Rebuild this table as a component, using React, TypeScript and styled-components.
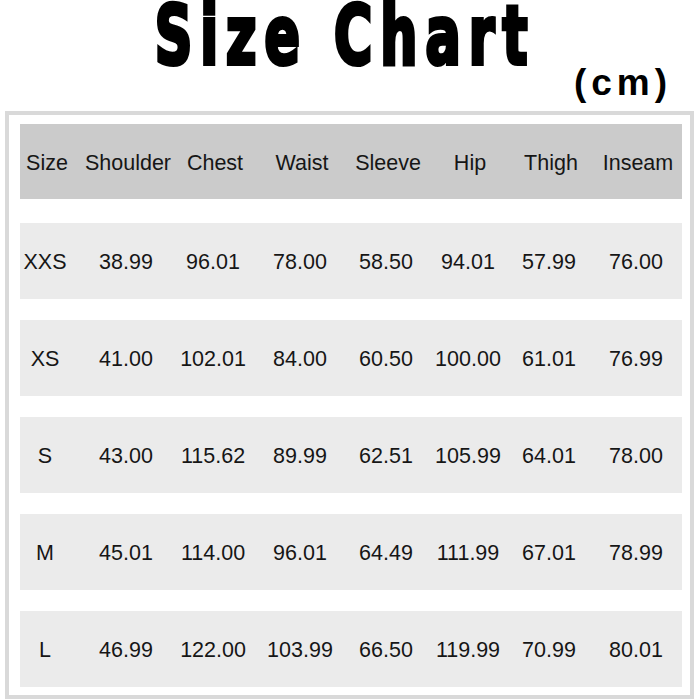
import React from "react";
import styled, { createGlobalStyle } from "styled-components";

const Global = createGlobalStyle`
  html, body { margin: 0; padding: 0; background: #ffffff; }
  body { width: 700px; height: 700px; overflow: hidden; font-family: "Liberation Sans", Arial, sans-serif; color: #111; }
`;

const Page = styled.div`
  width: 700px;
  height: 700px;
  display: flex;
  flex-direction: column;
`;

const TitleBlock = styled.header`
  display: flex;
  flex-direction: column;
  height: 111px;
`;

const Title = styled.h1`
  margin: 0;
  height: 47px;
  padding-top: 2px;
  display: flex;
  justify-content: center;
  align-items: flex-start;
  padding-right: 10px;
  font-family: "DejaVu Sans Condensed", "DejaVu Sans", sans-serif;
  font-stretch: condensed;
  font-weight: 700;
  font-size: 58px;
  line-height: 49px;
  letter-spacing: 8px;
  color: #000;
  -webkit-text-stroke: 3px #000;
  transform-origin: center top;
  transform: scaleY(1.4);
`;

const Unit = styled.div`
  align-self: flex-end;
  margin-right: 28px;
  margin-top: 14px;
  font-family: "Liberation Sans", Arial, sans-serif;
  font-weight: 700;
  font-size: 37px;
  line-height: 40px;
  letter-spacing: 5px;
  color: #000;
`;

const Frame = styled.section`
  margin: 0 6px 0 5px;
  border: 4px solid #d9d9d9;
  padding: 9px 8px 8px 11px;
  display: flex;
  flex-direction: column;
  gap: 21px;
`;

const columns = "50px 112px 62px 112px 60px 104px 58px 116px";

const Row = styled.div<{ $head?: boolean }>`
  display: grid;
  grid-template-columns: ${columns};
  height: ${(p) => (p.$head ? 75 : 76)}px;
  padding-left: ${(p) => (p.$head ? 2 : 0)}px;
  margin-bottom: ${(p) => (p.$head ? 3 : 0)}px;
  align-items: center;
  background: ${(p) => (p.$head ? "#cbcbcb" : "#ebebeb")};
`;

const Cell = styled.div`
  display: flex;
  justify-content: center;
  white-space: nowrap;
  font-family: "Liberation Sans", Arial, sans-serif;
  font-size: 21.5px;
  line-height: 24px;
  color: #161616;
  padding-top: 2px;
`;

const headers = ["Size", "Shoulder", "Chest", "Waist", "Sleeve", "Hip", "Thigh", "Inseam"];

const data: string[][] = [
  ["XXS", "38.99", "96.01", "78.00", "58.50", "94.01", "57.99", "76.00"],
  ["XS", "41.00", "102.01", "84.00", "60.50", "100.00", "61.01", "76.99"],
  ["S", "43.00", "115.62", "89.99", "62.51", "105.99", "64.01", "78.00"],
  ["M", "45.01", "114.00", "96.01", "64.49", "111.99", "67.01", "78.99"],
  ["L", "46.99", "122.00", "103.99", "66.50", "119.99", "70.99", "80.01"],
];

export default function App() {
  return (
    <Page>
      <Global />
      <TitleBlock>
        <Title>Size Chart</Title>
        <Unit>(cm)</Unit>
      </TitleBlock>
      <Frame>
        <Row $head>
          {headers.map((h) => (
            <Cell key={h}>{h}</Cell>
          ))}
        </Row>
        {data.map((r) => (
          <Row key={r[0]}>
            {r.map((v, i) => (
              <Cell key={i}>{v}</Cell>
            ))}
          </Row>
        ))}
      </Frame>
    </Page>
  );
}
